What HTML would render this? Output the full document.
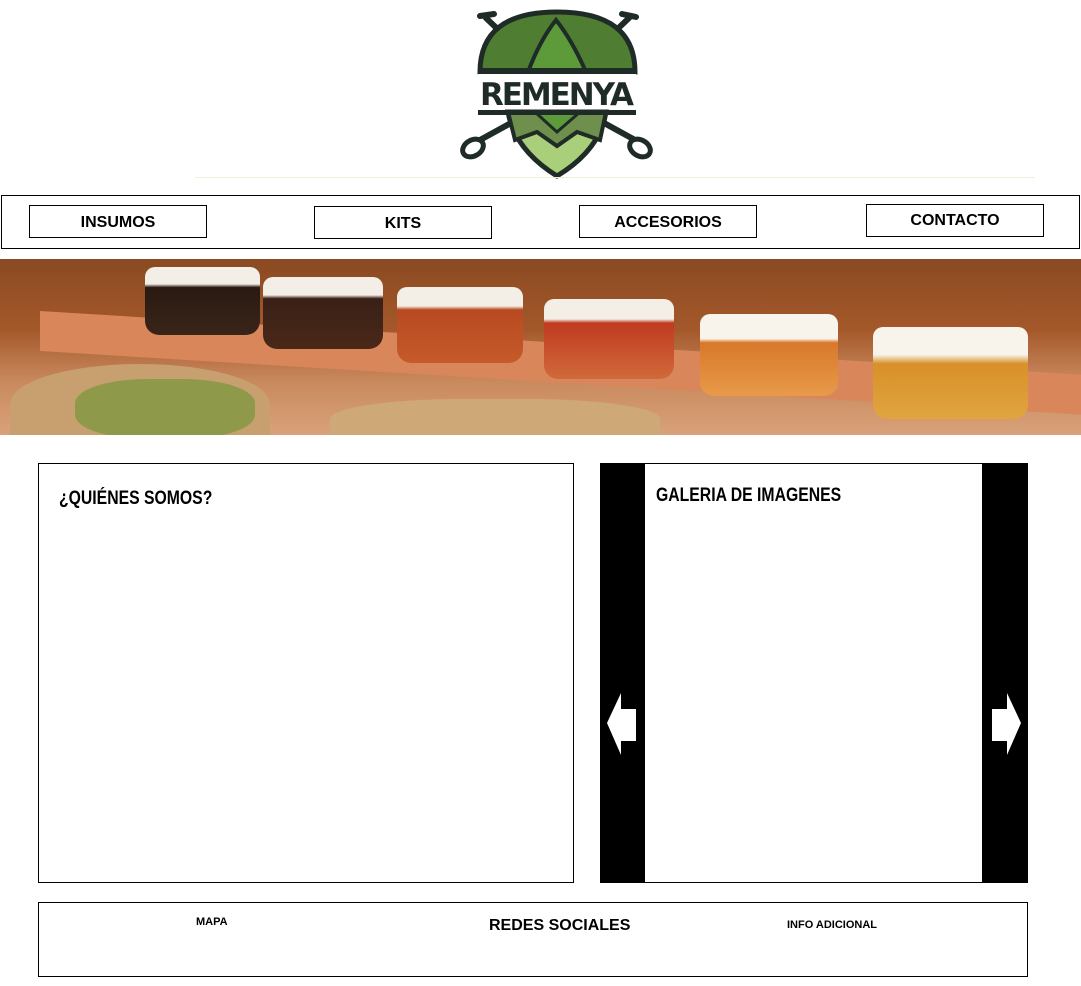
<!DOCTYPE html>
<html><head><meta charset="utf-8"><style>
body{margin:0;width:1081px;height:986px;background:#fff;position:relative;font-family:"Liberation Sans",Arial,sans-serif;overflow:hidden}
.a{position:absolute}
.btn{position:absolute;border:1px solid #000;font-weight:bold;font-size:16px;text-align:center;box-sizing:border-box;line-height:34px}
.glass{position:absolute;border-radius:10px 10px 14px 14px}
</style></head><body>
<!-- logo -->
<svg class="a" style="left:455px;top:8px" width="205" height="172" viewBox="455 8 205 172">
<g stroke="#1f2b27" stroke-width="6" stroke-linecap="round" fill="none">
<line x1="486" y1="18" x2="530" y2="60"/><line x1="629" y1="18" x2="585" y2="60"/>
<line x1="480" y1="16" x2="494" y2="14"/><line x1="622" y1="14" x2="636" y2="17"/>
<line x1="520" y1="118" x2="480" y2="140"/><line x1="595" y1="118" x2="635" y2="140"/>
</g>
<path d="M480 72 Q480 12 557 12 Q635 12 635 72 Z" fill="#4f7d32" stroke="#1f2b27" stroke-width="5"/>
<path d="M528 72 Q540 40 556 20 Q572 40 586 72 Z" fill="#5d9a3a" stroke="#1f2b27" stroke-width="4"/>
<path d="M508 112 Q515 150 557 176 Q600 150 606 112 Z" fill="#a9cf7a" stroke="#1f2b27" stroke-width="5"/>
<path d="M508 112 L515 140 L537 132 L557 146 L577 132 L600 140 L606 112 Z" fill="#6f8f4c" stroke="#1f2b27" stroke-width="4"/>
<path d="M535 112 L557 132 L580 112 Z" fill="#5d9a3a" stroke="#1f2b27" stroke-width="3"/>
<rect x="478" y="68" width="158" height="5" fill="#1f2b27"/>
<rect x="478" y="110" width="158" height="5" fill="#1f2b27"/>
<rect x="478" y="74" width="158" height="35" fill="#fff"/>
<text x="557" y="105" text-anchor="middle" font-family="DejaVu Sans,sans-serif" font-weight="bold" font-size="31" fill="#1f2b27" textLength="154">REMENYA</text>
<ellipse cx="473" cy="148" rx="11" ry="8" fill="#fff" stroke="#1f2b27" stroke-width="5" transform="rotate(-30 473 148)"/>
<ellipse cx="640" cy="148" rx="11" ry="8" fill="#fff" stroke="#1f2b27" stroke-width="5" transform="rotate(30 640 148)"/>
</svg>
<div class="a" style="left:195px;top:177px;width:840px;height:1px;background:#f3eedc"></div>
<!-- nav -->
<div class="a" style="left:1px;top:195px;width:1077px;height:52px;border:1px solid #000"></div>
<div class="btn" style="left:29px;top:205px;width:178px;height:33px">INSUMOS</div>
<div class="btn" style="left:314px;top:206px;width:178px;height:33px">KITS</div>
<div class="btn" style="left:579px;top:205px;width:178px;height:33px">ACCESORIOS</div>
<div class="btn" style="left:866px;top:204px;width:178px;height:33px;line-height:31px">CONTACTO</div>
<!-- banner -->
<div class="a" style="left:0;top:259px;width:1081px;height:176px;overflow:hidden;background:linear-gradient(#8a4a22,#a4582a 40%,#c98a5e 70%,#d9a27a)">
<div class="a" style="left:40px;top:52px;width:1060px;height:40px;background:#d9875a;transform:skewY(3.5deg);transform-origin:0 0"></div>
<div class="glass" style="left:145px;top:8px;width:115px;height:68px;background:linear-gradient(#f4efe6 0 25%,#2a1a12 30%,#3a2418)"></div>
<div class="glass" style="left:263px;top:18px;width:120px;height:72px;background:linear-gradient(#f4efe6 0 25%,#3a2018 30%,#4a2818)"></div>
<div class="glass" style="left:397px;top:28px;width:126px;height:76px;background:linear-gradient(#f4efe6 0 25%,#b84a22 30%,#c65a2a)"></div>
<div class="glass" style="left:544px;top:40px;width:130px;height:80px;background:linear-gradient(#f4efe6 0 25%,#c03a20 30%,#d06a3a)"></div>
<div class="glass" style="left:700px;top:55px;width:138px;height:82px;background:linear-gradient(#f8f4ec 0 30%,#d8782a 35%,#e89a4a)"></div>
<div class="glass" style="left:873px;top:68px;width:155px;height:92px;background:linear-gradient(#f8f4ec 0 30%,#d8902a 40%,#e0a540)"></div>
<div class="a" style="left:10px;top:105px;width:260px;height:80px;border-radius:50% 50% 0 0;background:#c8a070"></div>
<div class="a" style="left:75px;top:120px;width:180px;height:60px;border-radius:40%;background:#8e9a4a"></div>
<div class="a" style="left:330px;top:140px;width:330px;height:50px;border-radius:40% 40% 0 0;background:#cfa878"></div>
</div>
<!-- content -->
<div class="a" style="left:38px;top:463px;width:534px;height:418px;border:1px solid #000"></div>
<div class="a" style="left:59px;top:488px;font-weight:bold;font-size:19px;transform:scaleX(.83);transform-origin:0 0">¿QUIÉNES SOMOS?</div>
<div class="a" style="left:600px;top:463px;width:428px;height:420px;background:#000"></div>
<div class="a" style="left:645px;top:464px;width:337px;height:418px;background:#fff"></div>
<div class="a" style="left:656px;top:485px;font-weight:bold;font-size:19px;transform:scaleX(.83);transform-origin:0 0">GALERIA DE IMAGENES</div>
<svg class="a" style="left:600px;top:690px" width="428" height="70">
<path d="M7 33 L21 3 L21 19 L36 19 L36 51 L21 51 L21 65 Z" fill="#fff"/>
<path d="M421 33 L407 3 L407 19 L392 19 L392 51 L407 51 L407 65 Z" fill="#fff"/>
</svg>
<div class="a" style="left:38px;top:902px;width:988px;height:73px;border:1px solid #000"></div>
<div class="a" style="left:196px;top:916px;font-weight:bold;font-size:11px">MAPA</div>
<div class="a" style="left:489px;top:917px;font-weight:bold;font-size:16px">REDES SOCIALES</div>
<div class="a" style="left:787px;top:919px;font-weight:bold;font-size:11px">INFO ADICIONAL</div>
</body></html>
